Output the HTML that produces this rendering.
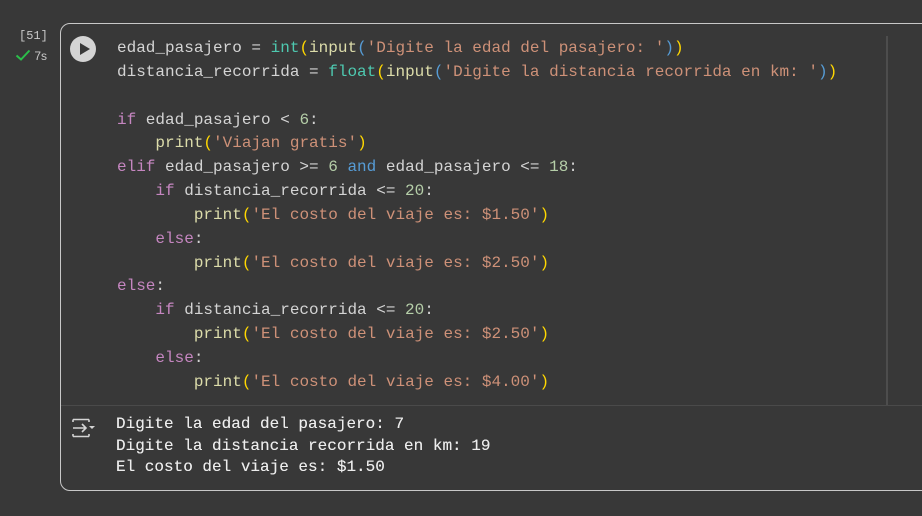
<!DOCTYPE html>
<html><head><meta charset="utf-8"><style>
html,body{margin:0;padding:0;background:#383838;width:922px;height:516px;overflow:hidden;font-family:"Liberation Mono",monospace}
.cnt{position:absolute;left:19px;top:29px;color:#c8c8c8;font-size:12px}
.chk{position:absolute;left:15px;top:49px;color:#c8c8c8;font-size:12px;font-family:"Liberation Sans",sans-serif}
.cell{position:absolute;left:60px;top:23px;width:880px;height:468px;border:1px solid #c8c8c8;border-radius:10px;box-sizing:border-box}
.run{position:absolute;left:70px;top:36px;width:26px;height:26px;border-radius:50%;background:#d4d4d4}
.run:after{content:"";position:absolute;left:10px;top:7px;border-left:10px solid #383838;border-top:6px solid transparent;border-bottom:6px solid transparent}
.vl{position:absolute;left:886px;top:36px;width:2px;height:370px;background:#4d4d4d}
.sep{position:absolute;left:61px;top:405px;width:861px;height:1px;background:#4a4a4a}
pre{margin:0;position:absolute}
.code{left:117px;top:37px;font-size:16px;line-height:23.85px;color:#d4d4d4}
.k{color:#c586c0}.f{color:#dcdcaa}.b{color:#4ec9b0}.s{color:#ce9178}.n{color:#b5cea8}.p{color:#ffd700}.a{color:#569cd6}
.out{left:116px;top:414px;font-size:16px;line-height:21.5px;color:#ececec;text-shadow:0 0 0.3px #ececec}
</style></head><body>
<div class="cnt">[51]</div>
<div class="chk"><svg width="16" height="12" style="vertical-align:-1px"><path d="M1.5 6.5 L6 10.5 L14.5 1.5" stroke="#2bbf4a" stroke-width="2" fill="none"/></svg> 7s</div>
<div class="cell"></div>
<div class="run"></div>
<div class="vl"></div>
<div class="sep"></div>
<pre class="code">edad_pasajero = <span class="b">int</span><span class="p">(</span><span class="f">input</span><span class="a">(</span><span class="s">'Digite la edad del pasajero: '</span><span class="a">)</span><span class="p">)</span>
distancia_recorrida = <span class="b">float</span><span class="p">(</span><span class="f">input</span><span class="a">(</span><span class="s">'Digite la distancia recorrida en km: '</span><span class="a">)</span><span class="p">)</span>

<span class="k">if</span> edad_pasajero &lt; <span class="n">6</span>:
    <span class="f">print</span><span class="p">(</span><span class="s">'Viajan gratis'</span><span class="p">)</span>
<span class="k">elif</span> edad_pasajero &gt;= <span class="n">6</span> <span class="a">and</span> edad_pasajero &lt;= <span class="n">18</span>:
    <span class="k">if</span> distancia_recorrida &lt;= <span class="n">20</span>:
        <span class="f">print</span><span class="p">(</span><span class="s">'El costo del viaje es: $1.50'</span><span class="p">)</span>
    <span class="k">else</span>:
        <span class="f">print</span><span class="p">(</span><span class="s">'El costo del viaje es: $2.50'</span><span class="p">)</span>
<span class="k">else</span>:
    <span class="k">if</span> distancia_recorrida &lt;= <span class="n">20</span>:
        <span class="f">print</span><span class="p">(</span><span class="s">'El costo del viaje es: $2.50'</span><span class="p">)</span>
    <span class="k">else</span>:
        <span class="f">print</span><span class="p">(</span><span class="s">'El costo del viaje es: $4.00'</span><span class="p">)</span></pre>
<svg style="position:absolute;left:71px;top:417px" width="26" height="22"><path d="M2 2.5 H18 M2 19.5 H18 M2 2.5 V5 M18 2.5 V5 M2 19.5 V17 M18 19.5 V17 M2 11 H15 M11 7 L15 11 L11 15" stroke="#d4d4d4" stroke-width="1.6" fill="none"/><path d="M18 9 L24 9 L21 12 Z" fill="#d4d4d4"/></svg>
<pre class="out">Digite la edad del pasajero: 7
Digite la distancia recorrida en km: 19
El costo del viaje es: $1.50</pre>
</body></html>
